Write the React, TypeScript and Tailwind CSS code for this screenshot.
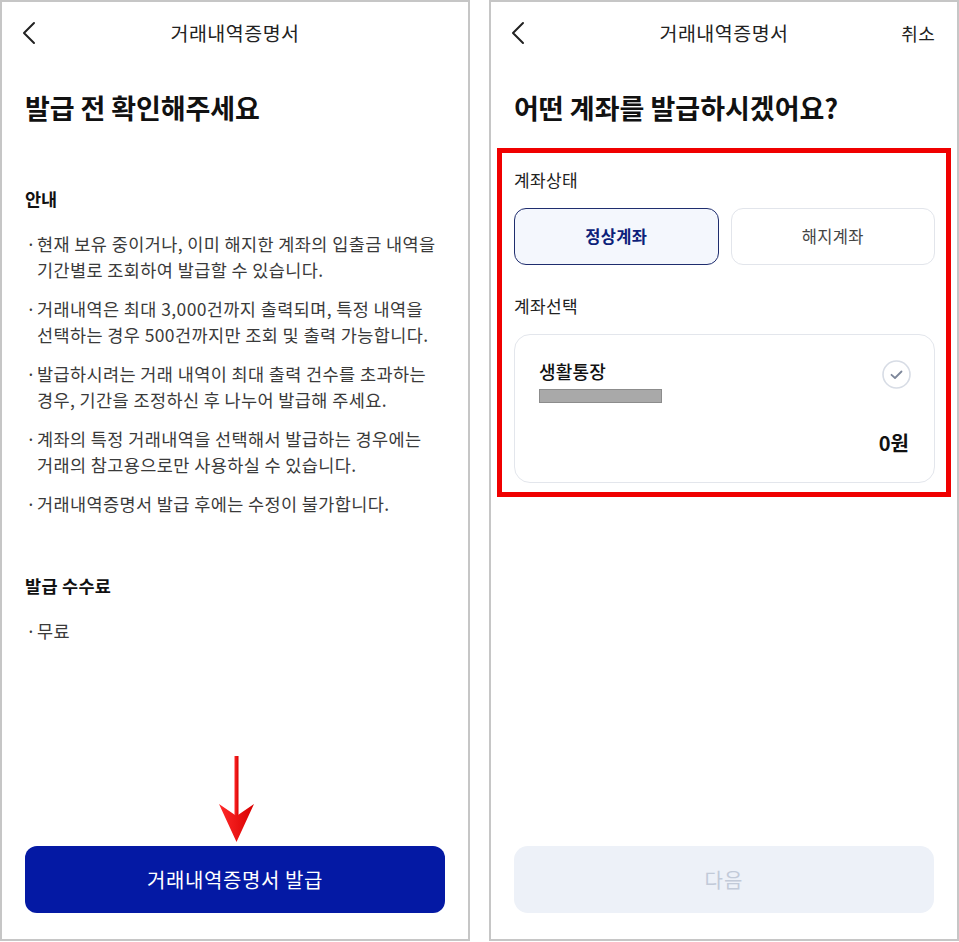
import React from "react";

const FONT = { fontFamily: '"Noto Sans CJK KR", "Noto Sans", sans-serif' };

function Chevron() {
  return (
    <svg width="16" height="24" viewBox="0 0 16 24" fill="none">
      <path d="M13 2 L3 12 L13 22" stroke="#222" strokeWidth="2" strokeLinecap="round" strokeLinejoin="round" />
    </svg>
  );
}

function Bullet({ children }: { children: React.ReactNode }) {
  return (
    <div className="flex text-[17.5px] leading-[26px] text-[#3a3a3a] tracking-[0.4px]">
      <span className="w-[12px] shrink-0 pl-[1px]">·</span>
      <span>{children}</span>
    </div>
  );
}

function LeftPanel() {
  return (
    <div className="relative flex h-[941px] w-[470px] shrink-0 flex-col border-2 border-[#c6c6c6] bg-white">
      <div className="relative flex h-[62px] items-center justify-center">
        <div className="absolute left-[19px] top-[19px]">
          <Chevron />
        </div>
        <span className="text-[19.5px] text-[#222] tracking-[0.5px]">거래내역증명서</span>
      </div>
      <div className="mt-[26px] px-[23px]">
        <h1 className="text-[27px] font-bold leading-[36px] text-[#111] tracking-[-0.1px]">발급 전 확인해주세요</h1>
        <h2 className="mt-[61px] text-[17.5px] font-bold leading-[24px] text-[#111]">안내</h2>
        <div className="mt-[20px] flex flex-col gap-[13px]">
          <Bullet>
            현재 보유 중이거나, 이미 해지한 계좌의 입출금 내역을
            <br />
            기간별로 조회하여 발급할 수 있습니다.
          </Bullet>
          <Bullet>
            거래내역은 최대 3,000건까지 출력되며, 특정 내역을
            <br />
            선택하는 경우 500건까지만 조회 및 출력 가능합니다.
          </Bullet>
          <Bullet>
            발급하시려는 거래 내역이 최대 출력 건수를 초과하는
            <br />
            경우, 기간을 조정하신 후 나누어 발급해 주세요.
          </Bullet>
          <Bullet>
            계좌의 특정 거래내역을 선택해서 발급하는 경우에는
            <br />
            거래의 참고용으로만 사용하실 수 있습니다.
          </Bullet>
          <Bullet>거래내역증명서 발급 후에는 수정이 불가합니다.</Bullet>
        </div>
        <h2 className="mt-[57px] text-[17.5px] font-bold leading-[24px] text-[#111] tracking-[0.3px]">발급 수수료</h2>
        <div className="mt-[20px]">
          <Bullet>무료</Bullet>
        </div>
      </div>
      <div className="mt-auto px-[23px] pb-[26px]">
        <button className="flex h-[67px] w-full items-center justify-center rounded-[12px] bg-[#0419a4] text-[20px] text-white tracking-[0.6px]">
          거래내역증명서 발급
        </button>
      </div>
      <svg className="absolute left-[214px] top-[752px]" width="42" height="90" viewBox="0 0 42 90">
        <defs>
          <linearGradient id="ar" x1="0" x2="1" y1="0" y2="0">
            <stop offset="0" stopColor="#ff2a2a" />
            <stop offset="1" stopColor="#d80000" />
          </linearGradient>
        </defs>
        <rect x="18.5" y="2" width="4" height="60" fill="url(#ar)" />
        <path d="M3 50 L20.5 62 L38 50 L20.5 88 Z" fill="url(#ar)" />
      </svg>
    </div>
  );
}

function RightPanel() {
  return (
    <div className="flex h-[941px] w-[470px] shrink-0 flex-col border-2 border-[#c6c6c6] bg-white">
      <div className="relative flex h-[62px] items-center justify-center">
        <div className="absolute left-[19px] top-[19px]">
          <Chevron />
        </div>
        <span className="text-[19.5px] text-[#222] tracking-[0.5px]">거래내역증명서</span>
        <span className="absolute right-[22px] top-[18px] text-[18px] leading-[26px] text-[#222] tracking-[0.3px]">취소</span>
      </div>
      <div className="mt-[26px] px-[23px]">
        <h1 className="text-[27px] font-bold leading-[36px] text-[#111] tracking-[0px]">어떤 계좌를 발급하시겠어요?</h1>
      </div>
      <div className="ml-[6px] mr-[6px] mt-[22px] border-[5px] border-[#f00000] pb-[9px] pl-[12px] pr-[11px] pt-[16px]">
        <div className="text-[17px] leading-[22px] text-[#222] tracking-[0.4px]">계좌상태</div>
        <div className="mt-[17px] grid grid-cols-2 gap-[12px]">
          <div className="flex h-[57px] items-center justify-center rounded-[12px] border-[1.5px] border-[#1f2d6e] bg-[#f4f7fd] text-[16.5px] font-bold text-[#0d1f7a] tracking-[0.3px]">
            정상계좌
          </div>
          <div className="flex h-[57px] items-center justify-center rounded-[12px] border border-[#e2e5eb] bg-white text-[16.5px] text-[#444] tracking-[0.3px]">
            해지계좌
          </div>
        </div>
        <div className="mt-[30px] text-[17px] leading-[22px] text-[#222] tracking-[0.4px]">계좌선택</div>
        <div className="mt-[17px] flex h-[149px] flex-col rounded-[16px] border border-[#e3e6ec] pb-[26px] pl-[24px] pr-[23px] pt-[24px]">
          <div className="flex items-start justify-between">
            <div className="flex flex-col">
              <span className="text-[18px] font-medium leading-[24px] text-[#111] tracking-[0.2px]">생활통장</span>
              <div className="mt-[6px] h-[14px] w-[123px] border border-[#8c8c8c] bg-[#a9a9a9]" />
            </div>
            <svg className="mt-[1px]" width="29" height="29" viewBox="0 0 29 29" fill="none">
              <circle cx="14.5" cy="14.5" r="13.5" stroke="#d7dce5" strokeWidth="1.6" />
              <path d="M9.5 14.8 L13 18 L19.5 11.5" stroke="#7d879a" strokeWidth="1.8" strokeLinecap="round" strokeLinejoin="round" />
            </svg>
          </div>
          <div className="mt-auto pr-[2px] text-right text-[20px] font-bold leading-[26px] text-[#111]">0원</div>
        </div>
      </div>
      <div className="mt-auto px-[23px] pb-[26px]">
        <button className="flex h-[67px] w-full items-center justify-center rounded-[14px] bg-[#edf1f8] text-[20px] text-[#c2cad8] tracking-[1px]">
          다음
        </button>
      </div>
    </div>
  );
}

export default function App() {
  return (
    <div className="flex h-[942px] w-[959px] gap-[19px] bg-white" style={FONT}>
      <LeftPanel />
      <RightPanel />
    </div>
  );
}
